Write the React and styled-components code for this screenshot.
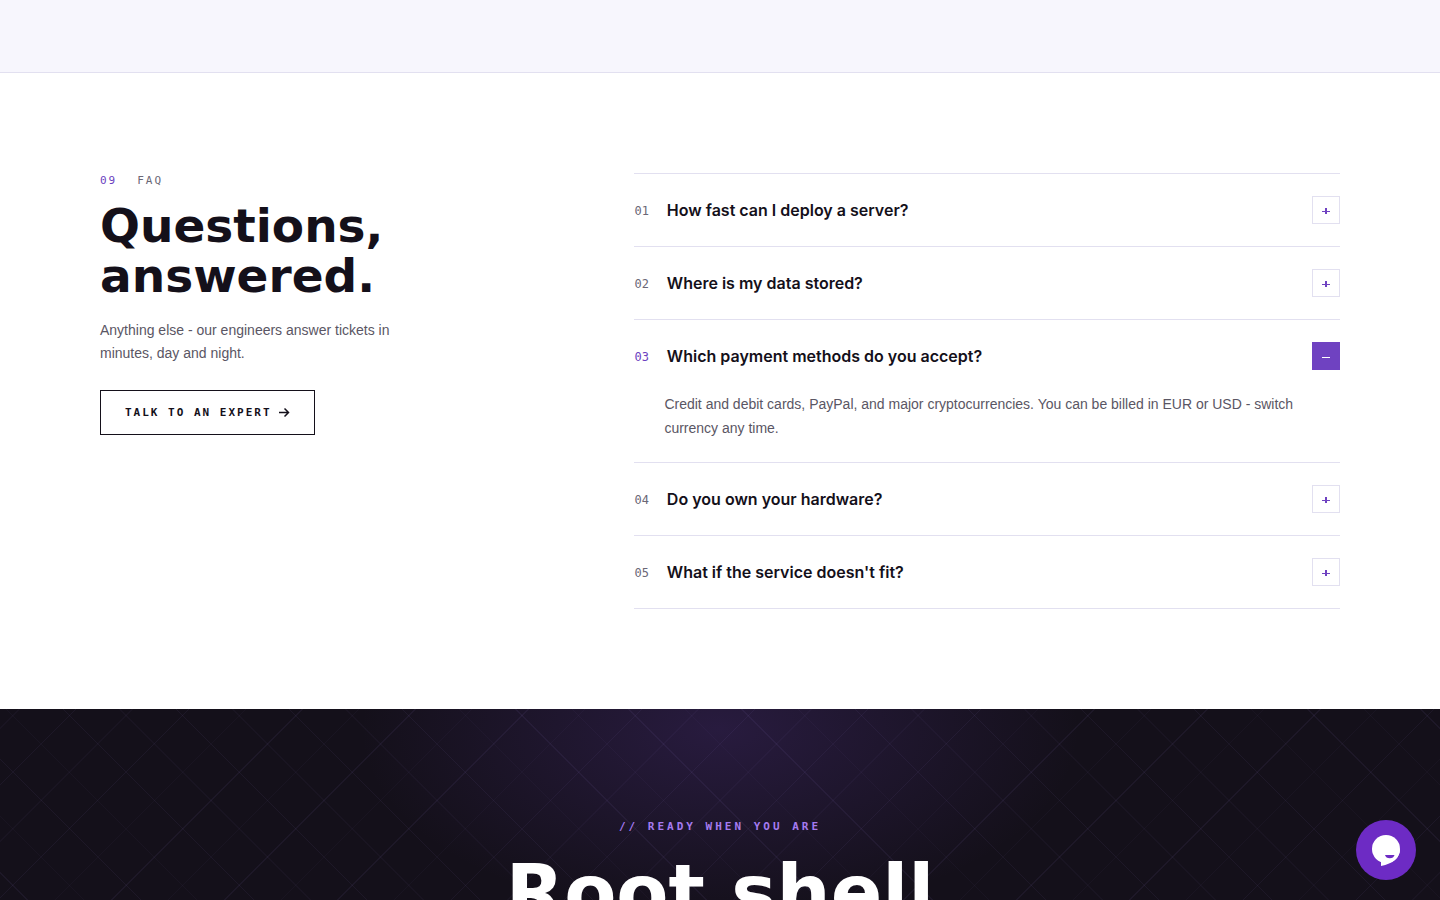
import React, { useState } from "react";
import styled, { createGlobalStyle } from "styled-components";

const GlobalStyle = createGlobalStyle`
  * {
    box-sizing: border-box;
  }

  body {
    margin: 0;
    background: #fff;
    color: #14101a;
    font-family: Inter, "Liberation Sans", sans-serif;
  }
`;

const mono = `"DejaVu Sans Mono", "Liberation Mono", monospace`;
const display = `"DejaVu Sans", Inter, sans-serif`;

const Page = styled.div`
  display: flex;
  flex-direction: column;
  height: 100vh;
  overflow: hidden;
`;

const Band = styled.div`
  flex: none;
  height: 73px;
  background: #f7f6fd;
  border-bottom: 1px solid #e2e0f0;
`;

const FaqSection = styled.section`
  flex: none;
  padding: 100px;
`;

const FaqGrid = styled.div`
  display: grid;
  grid-template-columns: 2fr 3fr;
  gap: 64px;
  align-items: start;
  max-width: 1240px;
  margin: 0 auto;
`;

const Kicker = styled.p`
  display: flex;
  gap: 20px;
  margin: 0 0 12px;
  font: 400 11px/16px ${mono};
  letter-spacing: 2px;
  color: #6b6776;
`;

const KickerNumber = styled.span`
  color: #6b3fc0;
`;

const Title = styled.h2`
  margin: 0 0 18px;
  font: 700 47px/50px ${display};
`;

const Lead = styled.p`
  max-width: 320px;
  margin: 0 0 25px;
  font: 400 14px/23px "Liberation Sans", sans-serif;
  color: #5a5664;
`;

const ExpertLink = styled.a`
  display: inline-flex;
  align-items: center;
  gap: 6px;
  height: 45px;
  padding: 0 24px;
  border: 1px solid #14101a;
  color: #14101a;
  font: 700 11px/16px ${mono};
  letter-spacing: 2px;
  text-decoration: none;
  white-space: nowrap;
`;

const FaqList = styled.div`
  border-top: 1px solid #e2e0f0;
`;

const FaqItem = styled.div`
  border-bottom: 1px solid #e2e0f0;
`;

const Question = styled.button`
  display: flex;
  align-items: center;
  gap: 18px;
  width: 100%;
  padding: 22px 0;
  border: 0;
  background: none;
  color: #14101a;
  font: 600 16px/28px Inter, sans-serif;
  text-align: left;
  cursor: pointer;
`;

const Index = styled.span`
  padding-top: 2px;
  font: 400 12px/14px ${mono};
  color: ${(props) => (props.$open ? "#6b3fc0" : "#6b6776")};
`;

const Toggle = styled.span`
  display: flex;
  align-items: center;
  justify-content: center;
  width: 28px;
  height: 28px;
  margin-left: auto;
  border: 1px solid ${(props) => (props.$open ? "#6f42c1" : "#e2e0f0")};
  background: ${(props) => (props.$open ? "#6f42c1" : "#fff")};
  color: ${(props) => (props.$open ? "#fff" : "#6f42c1")};
`;

const Answer = styled.p`
  margin: 0;
  padding: 0 44px 22px 30px;
  font: 400 14px/24px "Liberation Sans", sans-serif;
  color: #5a5664;
`;

const lineStrong = "rgba(150, 125, 215, 0.07)";
const lineSoft = "rgba(150, 125, 215, 0.04)";

const Cta = styled.section`
  flex: 1;
  min-height: 0;
  overflow: hidden;
  padding-top: 110px;
  text-align: center;
  background:
    repeating-linear-gradient(
      45deg,
      transparent 0 19px,
      ${lineStrong} 19px 20px,
      transparent 20px 59px,
      ${lineSoft} 59px 60px,
      transparent 60px 80px
    ),
    repeating-linear-gradient(
      -45deg,
      transparent 0 19px,
      ${lineSoft} 19px 20px,
      transparent 20px 59px,
      ${lineStrong} 59px 60px,
      transparent 60px 80px
    ),
    radial-gradient(360px 190px at 50% 20px, rgba(111, 66, 193, 0.22), transparent),
    #14101a;
`;

const CtaKicker = styled.p`
  margin: 0 0 20px;
  font: 700 11px/16px ${mono};
  letter-spacing: 3px;
  color: #a57bf0;
`;

const CtaTitle = styled.h2`
  margin: 0;
  font: 700 76px/76px ${display};
  color: #fff;
`;

const ChatButton = styled.button`
  position: fixed;
  right: 24px;
  bottom: 20px;
  width: 60px;
  height: 60px;
  padding: 0;
  border: 0;
  border-radius: 50%;
  background: #6d2bc4;
  cursor: pointer;

  svg {
    display: block;
  }
`;

const faqs = [
  { q: "How fast can I deploy a server?" },
  { q: "Where is my data stored?" },
  {
    q: "Which payment methods do you accept?",
    a: "Credit and debit cards, PayPal, and major cryptocurrencies. You can be billed in EUR or USD - switch currency any time.",
  },
  { q: "Do you own your hardware?" },
  { q: "What if the service doesn't fit?" },
];

const App = () => {
  const [openIndex, setOpenIndex] = useState(2);

  return (
    <Page>
      <GlobalStyle />
      <Band />
      <FaqSection>
        <FaqGrid>
          <div>
            <Kicker>
              <KickerNumber>09</KickerNumber>
              <span>FAQ</span>
            </Kicker>
            <Title>
              Questions,
              <br />
              answered.
            </Title>
            <Lead>Anything else - our engineers answer tickets in minutes, day and night.</Lead>
            <ExpertLink href="#contact">
              TALK TO AN EXPERT
              <svg width="12" height="12" viewBox="0 0 12 12" fill="none" stroke="currentColor" strokeWidth="1.5">
                <path d="M1 5.500h9M6.500 1.500l4 4-4 4" />
              </svg>
            </ExpertLink>
          </div>
          <FaqList>
            {faqs.map((item, index) => {
              const open = index === openIndex;
              return (
                <FaqItem key={item.q}>
                  <Question aria-expanded={open} onClick={() => setOpenIndex(open ? -1 : index)}>
                    <Index $open={open}>0{index + 1}</Index>
                    {item.q}
                    <Toggle $open={open}>
                      <svg width="8" height="8" viewBox="0 0 8 8" stroke="currentColor">
                        <path d="M0 5.500h8" />
                        {!open && <path d="M4 2v6.500" strokeWidth="2" />}
                      </svg>
                    </Toggle>
                  </Question>
                  {open && item.a && <Answer>{item.a}</Answer>}
                </FaqItem>
              );
            })}
          </FaqList>
        </FaqGrid>
      </FaqSection>
      <Cta>
        <CtaKicker>// READY WHEN YOU ARE</CtaKicker>
        <CtaTitle>Root shell</CtaTitle>
      </Cta>
      <ChatButton aria-label="Open chat">
        <svg width="60" height="60" viewBox="0 0 60 60">
          <circle cx="30" cy="29" r="14" fill="#fff" />
          <path fill="#fff" d="M25 40v6c12-2.500 19-8 19-17z" />
          <path fill="#6d2bc4" d="M29 35h9.500c-.4 2-2.300 3.300-4.700 3.300S29.400 37 29 35z" />
        </svg>
      </ChatButton>
    </Page>
  );
};

export default App;
